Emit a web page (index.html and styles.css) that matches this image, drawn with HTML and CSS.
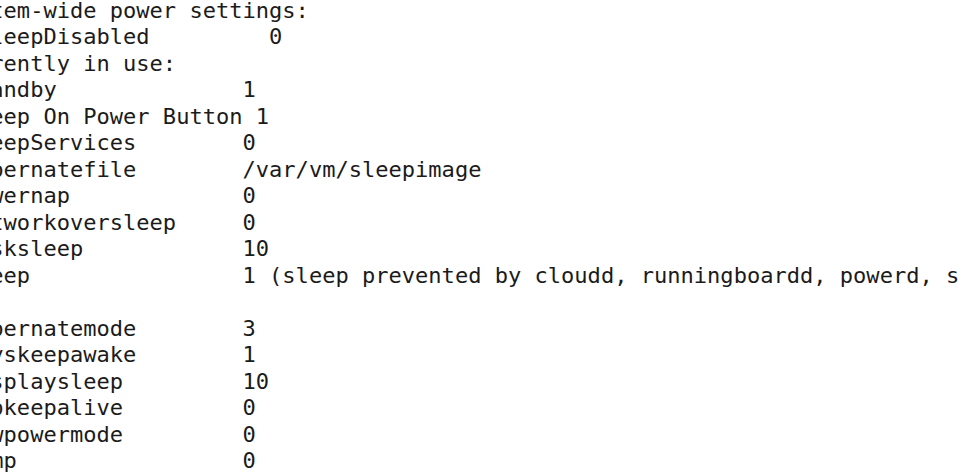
FILE: index.html
```html
<!DOCTYPE html>
<html>
<head>
<meta charset="utf-8">
<link rel="stylesheet" href="styles.css">
</head>
<body>
<div class="viewport">
<pre class="terminal">System-wide power settings:
  SleepDisabled         0
Currently in use:
 standby              1
 Sleep On Power Button 1
 SleepServices        0
 hibernatefile        /var/vm/sleepimage
 powernap             0
 networkoversleep     0
 disksleep            10
 sleep                1 (sleep prevented by cloudd, runningboardd, powerd, sharingd)

 hibernatemode        3
 ttyskeepawake        1
 displaysleep         10
 tcpkeepalive         0
 lowpowermode         0
 womp                 0</pre>
</div>
</body>
</html>
```

FILE: styles.css
```css
html, body {
  margin: 0;
  padding: 0;
  background: #ffffff;
}

.viewport {
  width: 958px;
  height: 475px;
  overflow: hidden;
  background: #ffffff;
}

.terminal {
  margin: -2.5px 0 0 -49.5px;
  padding: 0;
  font-family: "DejaVu Sans Mono", "Liberation Mono", monospace;
  font-size: 22.06px;
  line-height: 26.5px;
  color: #1b1b1b;
  white-space: pre;
}
```
